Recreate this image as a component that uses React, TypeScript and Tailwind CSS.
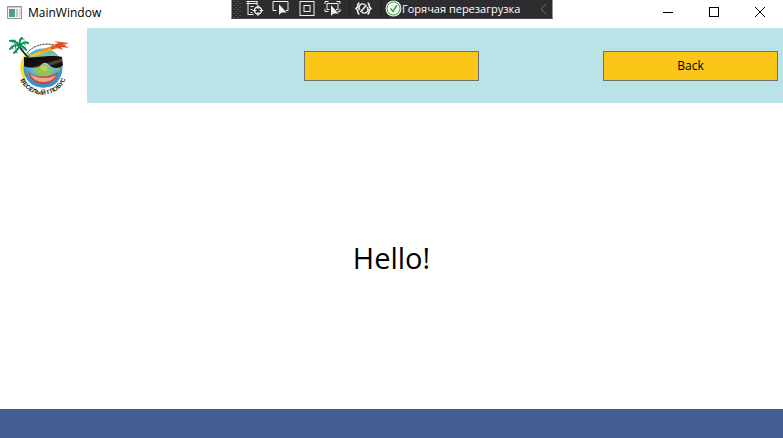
import React from "react";

function GlobeLogo() {
  return (
    <svg viewBox="8 36 64 60" className="h-[60px] w-16" role="img" aria-label="Весёлый глобус">
      <defs>
        <linearGradient id="lens" x1="0" x2="1" y1="0" y2="1">
          <stop offset="0" stopColor="#0a0806" />
          <stop offset="0.55" stopColor="#17120f" />
          <stop offset="0.66" stopColor="#5b5048" />
          <stop offset="0.78" stopColor="#120e0c" />
        </linearGradient>
        <radialGradient id="sea" cx="0.5" cy="0.4" r="0.6">
          <stop offset="0" stopColor="#a5dcf0" />
          <stop offset="0.6" stopColor="#5cb0dc" />
          <stop offset="1" stopColor="#2a80bd" />
        </radialGradient>
        <path id="caption" d="M20 79 A24.500 24.500 0 0 0 66 78" />
      </defs>
      <path d="M27 53 C19 60 19 74 26 82 C23 74 23 62 29 54 Z" fill="#ffe11a" stroke="#f7d512" strokeWidth="1" />
      <path d="M27 53 C33 45 48 41 58 47" fill="none" stroke="#333" strokeWidth="1" strokeDasharray="2.2 0.8" />
      <circle cx="43" cy="68" r="19.500" fill="url(#sea)" />
      <path d="M35 53 L43 50 L47 53 L44 56 L37 58 Z M49 51 L57 55 L59 60 L51 58 Z" fill="#8cc56c" />
      <path d="M37 65 L45 64 L53 70 L49 75 L42 78 L37 73 L33 70 Z M54 66 L61 65 L58 72 Z" fill="#8fc850" />
      <path d="M40 65 L47 66 L47 71 L41 70 Z" fill="#c3cf62" />
      <path d="M29 55 C40 53 46 47 61 45 L59 48 C48 50 43 54 31 57 Z" fill="#ffc51f" />
      <path d="M40 53 L53 48 L52 46 L43 49 Z" fill="#f48b20" />
      <path d="M51 46 L58 43 L54 41 L61 42 L69 43 L64 45 L69 48 L61 47 L63 50 L57 48 L51 50 Z" fill="#f15a24" />
      <path d="M56 46 L63 43 M58 47 L66 46" stroke="#b8321b" strokeWidth="0.8" />
      <path d="M24 57 C31 59 51 54 62 57 L63 65 C60 69 53 69 49 65 C46 62 44 62 41 65 C38 69 27 68 24 66 Z" fill="url(#lens)" />
      <path d="M28 72 C36 78 50 78 58 72 C57 80 50 84 43 84 C36 84 30 80 28 72 Z" fill="#c9483a" />
      <path d="M30 74 C38 79 49 79 56 75 C54 80 48 82 43 82 C38 82 32 79 30 74 Z" fill="#f0a693" />
      <path d="M26 74 C29 83 36 86.500 43 86.500 C51 86.500 58 83 60 74" fill="none" stroke="#3a92ca" strokeWidth="2" />
      <path d="M19 45 C20 49 23 52 28 57" fill="none" stroke="#20180f" strokeWidth="1.6" />
      <g fill="none" stroke="#079354" strokeLinecap="round">
        <path strokeWidth="2" d="M20 46 C17 42 13 40 10 41 M20 46 C16 44 12 46 10 49 M20 46 C18 49 16 51 14 53 M20 46 C19 41 20 39 22 38 M20 46 C22 42 26 42 28 43 M20 46 C23 46 25 48 26 50" />
        <path strokeWidth="1" d="M12 40 L13 43 M15 40 L15 45 M12 46 L13 49 M15 45 L16 49 M16 50 L17 53 M21 39 L24 39 M23 42 L25 45 M25 41 L28 44 M23 47 L23 50" />
      </g>
      <text
        fill="#111"
        className="text-[6px] font-bold"
        style={{ fontFamily: '"Liberation Sans", sans-serif' }}
      >
        <textPath href="#caption" textAnchor="middle" startOffset="50%">ВЕСЁЛЫЙ ГЛОБУС</textPath>
      </text>
    </svg>
  );
}

function WindowIcon() {
  return (
    <svg viewBox="0 0 15 14" className="h-3.5 w-[15px]" aria-hidden="true">
      <defs>
        <linearGradient id="pane" x1="0" x2="1" y1="0" y2="1">
          <stop offset="0" stopColor="#5b84bd" />
          <stop offset="1" stopColor="#58a96b" />
        </linearGradient>
      </defs>
      <rect x="0.5" y="0.5" width="14" height="12" fill="#f5f5f5" stroke="#9a9a9a" />
      <path d="M1 1.5h13" stroke="#c8ccd0" />
      <rect x="2" y="3" width="6" height="8" fill="url(#pane)" />
      <rect x="9" y="3" width="2" height="8" fill="#bcc7d2" />
      <rect x="12" y="3" width="2" height="8" fill="#d8dce0" />
    </svg>
  );
}

const toolButton = "flex h-[18px] w-[26px] items-center justify-center";

function DebugToolbar() {
  return (
    <div
      role="toolbar"
      aria-label="Отладка"
      className="absolute top-0 left-1/2 flex h-[19px] w-[321px] -translate-x-1/2 items-start border-b border-[#46464a] bg-[#2d2d30] text-white"
    >
      <svg viewBox="0 0 10 18" className="h-[18px] w-2.5" aria-hidden="true">
        <g stroke="#69696c" strokeDasharray="1 3">
          <path d="M2.5 1v17M6.5 1v17" />
          <path d="M4.5 3v15M8.5 3v15" />
        </g>
      </svg>
      <button type="button" aria-label="Дерево" className={toolButton}>
        <svg viewBox="0 0 18 18" className="size-[18px]" fill="none" stroke="#f1f1f1">
          <path d="M1 1.500h11M1 3.500h11M2.500 1v13M11.500 1v4M5 6.500h3M5 9.500h2M5 12.500h2M2 14.500h6" />
          <circle cx="12.500" cy="10.500" r="3.500" strokeWidth="1.4" />
          <path d="M12.500 5v4M12.500 12v4M7 10.500h4M14 10.500h4" />
        </svg>
      </button>
      <button type="button" aria-label="Выбрать элемент" className={toolButton}>
        <svg viewBox="0 0 18 18" className="size-[18px]" fill="none" stroke="#f1f1f1">
          <path d="M5 10.500H1.500v-9h15v9H13" />
          <path d="M7 3v13l3-3h6z" fill="#f1f1f1" stroke="#2d2d30" />
        </svg>
      </button>
      <button type="button" aria-label="Границы" className={toolButton}>
        <svg viewBox="0 0 18 18" className="size-[18px]" fill="none" stroke="#f1f1f1">
          <rect x="2.500" y="1.500" width="14" height="14" />
          <rect x="6.500" y="5.500" width="6" height="6" />
        </svg>
      </button>
      <button type="button" aria-label="Отслеживать фокус" className={toolButton}>
        <svg viewBox="0 0 18 18" className="size-[18px]" fill="none" stroke="#f1f1f1">
          <path d="M1.5 4V1.5H5M13 1.5h3.500V4M1.5 9v2.500H5M16.500 9v2.500H13" />
          <path d="M6 9.500H3.500v-6h11v6H12" />
          <path d="M7 4v13l3-3h6z" fill="#f1f1f1" stroke="#2d2d30" />
        </svg>
      </button>
      <span className="ml-1 h-[18px] w-px bg-[#222224]" />
      <button type="button" aria-label="Привязки" className={toolButton}>
        <svg viewBox="0 0 18 18" className="size-[18px]" fill="none" stroke="#f1f1f1" strokeWidth="1.600">
          <path d="M5 3C3 3 3.500 5 3 7L1.500 8.500 3 10c.5 2 0 4 2 4M13 3c2 0 1.500 2 2 4l1.500 1.500L15 10c-.5 2 0 4-2 4" />
          <path d="M5.500 10a3.500 3.500 0 0 1 5-5M12.500 7a3.500 3.500 0 0 1-5 5M6 12l6-7" />
        </svg>
      </button>
      <span className="mr-[3px] ml-1 h-[18px] w-px bg-[#222224]" />
      <button type="button" className="flex h-[18px] items-center text-[11px] leading-4 whitespace-nowrap">
        <svg viewBox="0 0 18 18" className="size-[18px]" aria-hidden="true">
          <circle cx="9" cy="8.500" r="8" fill="#f5f5f5" />
          <circle cx="9" cy="8.500" r="6.500" fill="#fff" stroke="#36a243" strokeWidth="1" />
          <path d="M6 8.500l2.500 3L12.500 5" fill="none" stroke="#36a243" strokeWidth="1.500" />
        </svg>
        <span>Горячая перезагрузка</span>
      </button>
      <button type="button" aria-label="Свернуть панель" className="ml-auto flex h-[18px] w-[18px] items-center justify-center">
        <svg viewBox="0 0 8 12" className="h-3 w-2" fill="none" stroke="#69696c" strokeWidth="1">
          <path d="M6.500 1l-5 5 5 5" />
        </svg>
      </button>
    </div>
  );
}

const captionButton = "flex h-6 w-[46px] items-center justify-center";
const actionButton = "h-[30px] w-[175px] border border-[#707070] bg-[#fbc617] text-xs";

export default function App() {
  return (
    <div
      className="relative flex min-h-screen flex-col bg-white text-black"
      style={{ fontFamily: '"Open Sans", "Noto Sans", sans-serif' }}
    >
      <div className="flex h-7 items-start justify-between pl-[7px]">
        <div className="flex h-[26px] items-center gap-1.5 text-xs">
          <WindowIcon />
          <span>MainWindow</span>
        </div>
        <div className="flex">
          <button type="button" aria-label="Minimize" className={captionButton}>
            <svg viewBox="0 0 10 10" className="size-2.5" stroke="#000"><path d="M0 5.500h10" /></svg>
          </button>
          <button type="button" aria-label="Maximize" className={captionButton}>
            <svg viewBox="0 0 10 10" className="size-2.5" fill="none" stroke="#000"><rect x="0.500" y="0.500" width="9" height="9" /></svg>
          </button>
          <button type="button" aria-label="Close" className={captionButton}>
            <svg viewBox="0 0 10 10" className="size-2.5" stroke="#000"><path d="M0 0l10 10M10 0L0 10" /></svg>
          </button>
        </div>
      </div>
      <DebugToolbar />

      <header className="grid h-[75px] grid-cols-3 items-center bg-[#b9e3e6]">
        <div className="flex h-full w-[87px] items-center bg-white pl-2">
          <GlobeLogo />
        </div>
        <button type="button" aria-label="Action" className={`${actionButton} justify-self-center`} />
        <button type="button" className={`${actionButton} mr-[5px] justify-self-end`}>Back</button>
      </header>

      <main className="flex flex-1 items-center justify-center pt-[3px]">
        <h1 className="text-[29px] leading-10">Hello!</h1>
      </main>

      <footer className="h-[29px] bg-[#455c93]" />
    </div>
  );
}
